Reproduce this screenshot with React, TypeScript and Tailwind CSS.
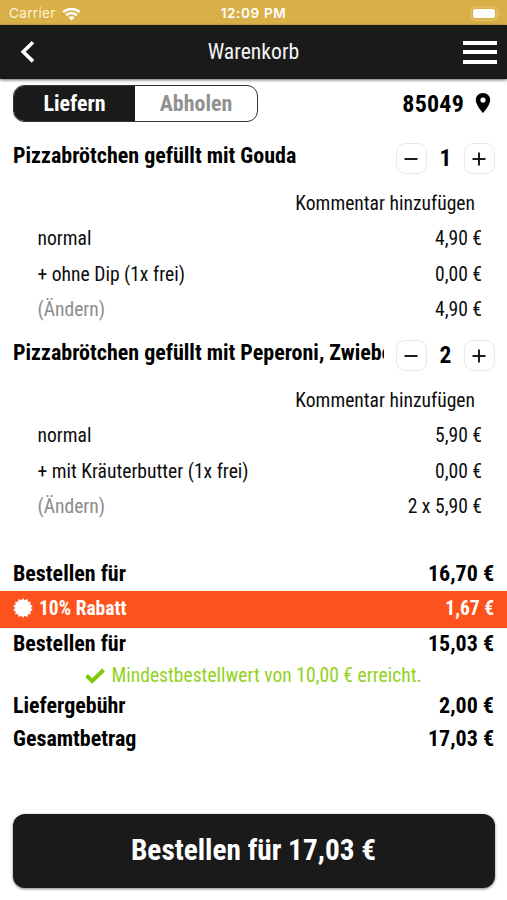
import type { ReactNode } from "react";

type Line = { label: string; price: string; muted?: boolean };
type Item = { name: string; qty: number; lines: Line[] };

const items: Item[] = [
  {
    name: "Pizzabrötchen gefüllt mit Gouda",
    qty: 1,
    lines: [
      { label: "normal", price: "4,90 €" },
      { label: "+ ohne Dip (1x frei)", price: "0,00 €" },
      { label: "(Ändern)", price: "4,90 €", muted: true },
    ],
  },
  {
    name: "Pizzabrötchen gefüllt mit Peperoni, Zwiebeln",
    qty: 2,
    lines: [
      { label: "normal", price: "5,90 €" },
      { label: "+ mit Kräuterbutter (1x frei)", price: "0,00 €" },
      { label: "(Ändern)", price: "2 x 5,90 €", muted: true },
    ],
  },
];

function StatusBar() {
  return (
    <div className="grid h-[25px] grid-cols-3 items-center bg-[#d9b048] pt-[3px] pr-[6px] pl-[9px] font-['Inter',sans-serif] text-[13.5px] text-white">
      <div className="flex items-center gap-[6px]">
        <span className="tracking-[0.35px] text-[#fdf3d4]">Carrier</span>
        <svg width="19" height="14" viewBox="0 0 19 14" fill="none" stroke="white" strokeWidth="2.5" className="mb-px">
          <path d="M1.2 5.2C5.8 .9 13.2 .9 17.8 5.2" />
          <path d="M4.2 8.3C7.3 5.5 11.7 5.5 14.8 8.3" />
          <path d="M9.5 13.4L6.5 10.4C8.2 8.9 10.8 8.9 12.5 10.4Z" fill="white" stroke="none" />
        </svg>
      </div>
      <span className="pr-[3px] text-center font-semibold tracking-[0.65px]">12:09 PM</span>
      <div className="flex items-center justify-end">
        <svg width="31" height="15" viewBox="0 0 31 15" className="mb-px">
          <rect x="1" y="1" width="26" height="13" rx="4" fill="none" stroke="#e4c573" strokeWidth="1.2" />
          <rect x="3" y="3" width="22" height="9" rx="2.2" fill="white" />
          <path d="M28.7 5.2C30.4 6 30.4 9 28.7 9.8Z" fill="#e4c573" />
        </svg>
      </div>
    </div>
  );
}

function Header() {
  return (
    <header className="flex h-[54px] items-center justify-between bg-[#1a1a1a] pr-[10px] pl-[20px] text-white shadow-[0_1px_3px_rgba(0,0,0,0.6)]">
      <svg width="24" height="24" viewBox="0 0 24 24" fill="none" stroke="white" strokeWidth="3.6">
        <path d="M13 2.2L3.2 11.8L13 21.4" />
      </svg>
      <h1 className="text-[21.7px] text-[#f4f4f4]">Warenkorb</h1>
      <div className="flex w-[34px] flex-col gap-[5.5px]">
        <span className="h-[4px] bg-white" />
        <span className="h-[4px] bg-white" />
        <span className="h-[4px] bg-white" />
      </div>
    </header>
  );
}

function StepButton({ plus }: { plus?: boolean }) {
  return (
    <button className="flex size-[31px] items-center justify-center rounded-[9px] border border-[#e9e9e9] bg-white pr-[1.5px]">
      <svg width="14" height="14" viewBox="0 0 14 14" stroke="#111" strokeWidth="1.9">
        <path d="M.5 7H13.5" />
        {plus && <path d="M7 .5V13.5" />}
      </svg>
    </button>
  );
}

function CartItem({ item }: { item: Item }) {
  return (
    <section>
      <div className="flex h-[55px] items-center pr-[12px] pl-[13px]">
        <h2 className="mb-[4px] w-[371px] overflow-hidden text-[22px] leading-[30px] font-bold whitespace-nowrap text-black">
          {item.name}
        </h2>
        <div className="ml-auto flex items-center pt-px">
          <StepButton />
          <span className="w-[37px] text-center text-[23.5px] font-bold text-black">{item.qty}</span>
          <StepButton plus />
        </div>
      </div>
      <div className="flex h-[35.5px] items-center justify-end pt-px pr-[32px] text-[19.6px]">Kommentar hinzufügen</div>
      {item.lines.map((l) => (
        <div key={l.label} className="flex h-[35.5px] items-center justify-between pt-px pr-[25px] pl-[37.5px] text-[19.6px]">
          <span className={l.muted ? "text-[#8c8c8c]" : ""}>{l.label}</span>
          <span>{l.price}</span>
        </div>
      ))}
    </section>
  );
}

function Total({ label, children }: { label: string; children: ReactNode }) {
  return (
    <div className="flex h-[33px] items-center justify-between px-[13px] text-[22px] font-bold text-black">
      <span>{label}</span>
      <span>{children}</span>
    </div>
  );
}

const burst = Array.from({ length: 28 }, (_, i) => {
  const a = (i * Math.PI) / 14;
  const r = i % 2 ? 8 : 10;
  return `${(10 + r * Math.sin(a)).toFixed(2)},${(10 - r * Math.cos(a)).toFixed(2)}`;
}).join(" ");

export default function App() {
  return (
    <div className="flex h-[900px] w-[507px] flex-col overflow-hidden bg-white font-['Roboto_Condensed','Roboto',sans-serif] leading-none text-[#0d0d0d]">
      <StatusBar />
      <Header />
      <div className="flex h-[51.5px] shrink-0 items-start justify-between pt-[6px] pr-[16px] pl-[13px]">
        <div className="flex h-[37px] w-[245px] overflow-hidden rounded-[11px] border border-[#333] text-[22px] font-bold">
          <button className="flex w-[121px] items-center justify-center bg-[#1a1a1a] text-white">Liefern</button>
          <button className="flex flex-1 items-center justify-center text-[#919191]">Abholen</button>
        </div>
        <div className="flex h-[37px] items-center gap-[11px] text-[24px] font-bold text-black">
          <span className="tracking-[0.2px]">85049</span>
          <svg width="16" height="22" viewBox="0 0 16 22" fill="currentColor" className="mb-[2px]">
            <path
              fillRule="evenodd"
              d="M8 1C3.900 1 .8 4.100 .8 8c0 5.200 7.200 13 7.200 13S15.200 13.200 15.200 8c0-3.900-3.100-7-7.200-7Zm0 4.500a2.600 2.600 0 1 1 0 5.200a2.600 2.600 0 0 1 0-5.200Z"
            />
          </svg>
        </div>
      </div>
      {items.map((it) => (
        <CartItem key={it.name} item={it} />
      ))}
      <div className="mt-[33px]">
        <Total label="Bestellen für">16,70 €</Total>
        <div className="flex h-[37px] items-center justify-between bg-[#fd521b] px-[13px] text-[19.5px] font-bold text-white">
          <span className="flex items-center gap-[6px]">
            <svg width="20" height="20" viewBox="0 0 20 20" fill="white" className="mb-[2px]">
              <polygon points={burst} />
            </svg>
            10% Rabatt
          </span>
          <span>1,67 €</span>
        </div>
        <Total label="Bestellen für">15,03 €</Total>
        <div className="flex h-[29px] items-center justify-center gap-[6px] pt-px text-[19.6px] text-[#93d11c]">
          <svg width="20" height="16" viewBox="0 0 20 16" fill="none" stroke="#7fc90c" strokeWidth="4">
            <path d="M1.500 7.500L7.200 13L18.500 2" />
          </svg>
          <span>Mindestbestellwert von 10,00 € erreicht.</span>
        </div>
        <Total label="Liefergebühr">2,00 €</Total>
        <Total label="Gesamtbetrag">17,03 €</Total>
      </div>
      <button className="mx-[12.5px] mt-auto mb-[12px] flex h-[74px] shrink-0 items-center justify-center rounded-[12px] bg-[#1a1a1a] text-[29.300px] font-bold text-white shadow-[0_1px_3px_rgba(0,0,0,0.5)]">
        Bestellen für 17,03 €
      </button>
    </div>
  );
}
